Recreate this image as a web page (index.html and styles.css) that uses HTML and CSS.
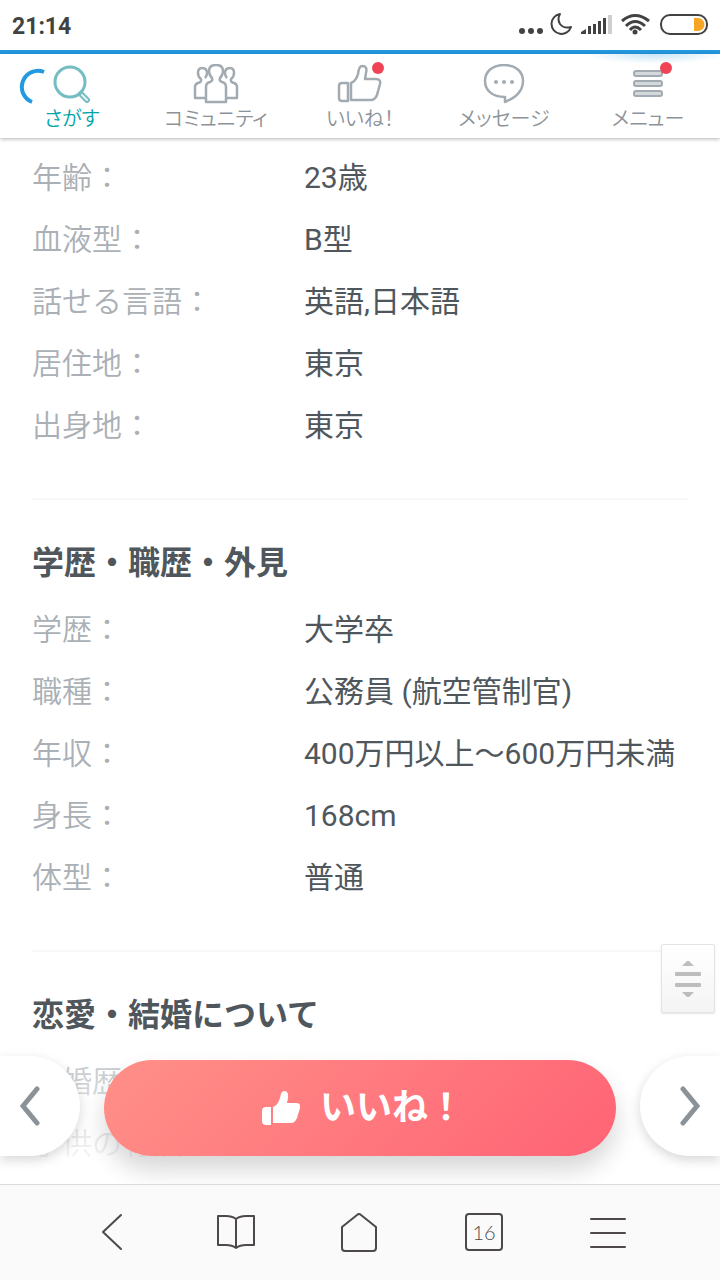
FILE: index.html
```html
<!DOCTYPE html>
<html lang="ja">
<head>
    <meta charset="utf-8">
    <meta name="viewport" content="width=device-width, initial-scale=1">
    <title>プロフィール</title>
    <link rel="stylesheet" href="styles.css">
</head>
<body>

<div class="status-bar">
    <div class="clock">21:14</div>
    <svg class="status-icons" width="192" height="28" viewBox="0 0 192 28" aria-hidden="true">
        <g fill="#424242">
            <circle cx="6" cy="19" r="3"/>
            <circle cx="15" cy="19" r="3"/>
            <circle cx="24" cy="19" r="3"/>
        </g>
        <path d="M44 2A10 10 0 1 0 55 15Q48 17 44 12Q41 7 44 2Z" fill="none" stroke="#424242" stroke-width="2" stroke-linejoin="round"/>
        <path d="M54 22v-2l5-3v5Z" fill="none"/>
        <path d="M65 22v-2l5-3v5ZM72 22v-8h3v8ZM77 22V12h3v10ZM82 22V9h3v13ZM87 22V6h3v16Z" fill="#424242"/>
        <path d="M92 22V3h4v19Z" fill="#cfcfcf"/>
        <g fill="none" stroke="#424242" stroke-width="3">
            <path d="M106 9Q119 -2 133 9"/>
            <path d="M110 14Q119 5 129 14"/>
            <path d="M114 18Q119 12 125 18"/>
        </g>
        <circle cx="119" cy="20" r="2.500" fill="#424242"/>
        <rect x="145" y="3" width="46" height="19" rx="9" fill="none" stroke="#424242" stroke-width="2"/>
        <path d="M178 6h4a6 6 0 0 1 0 13h-4Z" fill="#f8a526"/>
    </svg>
</div>
<div class="progress"></div>

<nav class="top-nav">
    <a href="#" class="active">
        <span class="nav-icon">
            <svg width="48" height="40" viewBox="0 0 48 40" fill="none" stroke="#74bdc2" stroke-width="3">
                <circle cx="22" cy="18" r="15"/>
                <path d="M33 30l6 6" stroke-width="6" stroke-linecap="round"/>
                <path d="M34 31l5 5" stroke="#e6f4f5" stroke-width="2" stroke-linecap="round"/>
            </svg>
        </span>
        さがす
    </a>
    <a href="#">
        <span class="nav-icon">
            <svg width="48" height="40" viewBox="0 0 48 40" fill="none" stroke="#a2abb1" stroke-width="2.500" stroke-linejoin="round">
                <path d="M15 34H3V23q0-3 3-4q4-1 3-4q-3-2-3-6q0-5 4-5q5 0 5 5q0 3-2 5"/>
                <path d="M33 34h12V23q0-3-3-4q-4-1-3-4q3-2 3-6q0-5-4-5q-5 0-5 5q0 3 2 5"/>
                <path d="M14 38V23q0-4 4-5q3-1 2-4q-3-3-3-7q0-6 7-6q7 0 7 6q0 4-3 7q-1 3 2 4q4 1 4 5v15Z"/>
            </svg>
        </span>
        コミュニティ
    </a>
    <a href="#">
        <span class="nav-icon">
            <svg width="48" height="40" viewBox="0 0 48 40" fill="none" stroke="#a2abb1" stroke-width="2.500" stroke-linejoin="round">
                <path d="M6 19h6v18H6q-3 0-3-3V22q0-3 3-3Z"/>
                <path d="M15 36V19q5-2 7-9q1-8 4-8q6 0 4 7l-1 6h11q5 0 4 5l-3 11q-2 5-6 5Z"/>
            </svg>
            <i class="badge"></i>
        </span>
        いいね！
    </a>
    <a href="#">
        <span class="nav-icon">
            <svg width="48" height="40" viewBox="0 0 48 40" fill="none" stroke="#a2abb1" stroke-width="2.500" stroke-linejoin="round">
                <path d="M25 38V33C12 33 5 26 5 17C5 7 13 1 24 1C35 1 43 7 43 17C43 27 35 34 25 38Z"/>
                <g fill="#a2abb1" stroke="none"><circle cx="16" cy="18" r="2"/><circle cx="24" cy="18" r="2"/><circle cx="32" cy="18" r="2"/></g>
            </svg>
        </span>
        メッセージ
    </a>
    <a href="#">
        <span class="nav-icon">
            <svg width="48" height="40" viewBox="0 0 48 40" fill="#d3d8da" stroke="#a2abb1" stroke-width="2">
                <rect x="10" y="7" width="28" height="5" rx="2"/>
                <rect x="10" y="17" width="28" height="5" rx="2"/>
                <rect x="10" y="27" width="28" height="5" rx="2"/>
            </svg>
            <i class="badge"></i>
        </span>
        メニュー
    </a>
    <svg class="spinner" width="30" height="40" viewBox="0 0 30 40" aria-hidden="true">
        <path d="M26 4A16 16 0 0 0 14 34" fill="none" stroke="#2399e0" stroke-width="4"/>
    </svg>
</nav>

<div class="content">
    <main class="profile">
        <section>
            <dl>
                <dt>年齢：</dt><dd>23歳</dd>
                <dt>血液型：</dt><dd>B型</dd>
                <dt>話せる言語：</dt><dd>英語,日本語</dd>
                <dt>居住地：</dt><dd>東京</dd>
                <dt>出身地：</dt><dd>東京</dd>
            </dl>
        </section>
        <section>
            <h2>学歴・職歴・外見</h2>
            <dl>
                <dt>学歴：</dt><dd>大学卒</dd>
                <dt>職種：</dt><dd>公務員 (航空管制官)</dd>
                <dt>年収：</dt><dd>400万円以上〜600万円未満</dd>
                <dt>身長：</dt><dd>168cm</dd>
                <dt>体型：</dt><dd>普通</dd>
            </dl>
        </section>
        <section>
            <h2>恋愛・結婚について</h2>
            <dl>
                <dt>結婚歴：</dt><dd></dd>
                <dt>子供の有無：</dt><dd></dd>
            </dl>
        </section>
    </main>

    <button class="scroll-handle" aria-label="スクロール">
        <svg width="28" height="40" viewBox="0 0 28 40" fill="#bdbdbd">
            <path d="M8 7l5-5h2l5 5ZM8 33l5 5h2l5-5Z"/>
            <rect x="1" y="13" width="26" height="4" rx="1"/>
            <rect x="1" y="24" width="26" height="4" rx="1"/>
        </svg>
    </button>

    <div class="actions">
        <button class="page-button prev" aria-label="前へ">
            <svg width="20" height="40" viewBox="0 0 20 40"><path d="M17 3L3 20L17 37"/></svg>
        </button>
        <button class="like-button">
            <svg width="40" height="36" viewBox="0 0 40 36" fill="#fff">
                <path d="M6 17h5v18H6q-4 0-4-4V21q0-4 4-4Z"/>
                <path d="M13 33V17q5-2 7-9q1-7 4-7q5 0 4 7l-1 5h9q5 0 4 5l-3 10q-2 5-6 5Z"/>
            </svg>
            いいね！
        </button>
        <button class="page-button next" aria-label="次へ">
            <svg width="20" height="40" viewBox="0 0 20 40"><path d="M3 3L17 20L3 37"/></svg>
        </button>
    </div>
</div>

<footer class="browser-bar">
    <button aria-label="戻る">
        <svg width="40" height="40" viewBox="0 0 40 40"><path d="M29 3L11 20L29 37"/></svg>
    </button>
    <button aria-label="ブックマーク">
        <svg width="40" height="40" viewBox="0 0 40 40"><path d="M20 7Q16 4 10 4H2v29h8q6 0 10 3q4-3 10-3h8V4h-8q-6 0-10 3v29"/></svg>
    </button>
    <button aria-label="ホーム">
        <svg width="40" height="40" viewBox="0 0 40 40"><path d="M2 15L17 3q2-2 4 0l15 12v21q0 3-3 3H5q-3 0-3-3Z"/></svg>
    </button>
    <button aria-label="タブ"><span class="tab-count">16</span></button>
    <button aria-label="メニュー">
        <svg width="40" height="40" viewBox="0 0 40 40"><path d="M3 7h34M3 21h34M3 35h34"/></svg>
    </button>
</footer>

</body>
</html>
```
FILE: styles.css
```css
* {
    padding: 0;
    margin: 0;
    box-sizing: border-box;
}

body {
    display: flex;
    flex-direction: column;
    height: 100vh;
    overflow: hidden;
    background-color: #fff;
    color: #50575c;
    font-family: Roboto, 'Noto Sans CJK JP', sans-serif;
}

button {
    border: none;
    background: none;
    font-family: inherit;
    cursor: pointer;
}

svg {
    display: block;
}

.status-bar {
    display: flex;
    flex: none;
    justify-content: space-between;
    align-items: center;
    height: 50px;
    padding: 2px 12px 0;
}

.clock {
    color: #424242;
    font-size: 23px;
    font-weight: bold;
}

.progress {
    flex: none;
    height: 4px;
    background-color: #2399e0;
}

.top-nav {
    position: relative;
    z-index: 2;
    display: flex;
    flex: none;
    height: 84px;
    padding-top: 10px;
    background: radial-gradient(ellipse 70px 10px at 91% 0, #c8e5f5, #fff);
    box-shadow: 0 1px 4px rgba(0, 0, 0, 0.3);
}

.top-nav a {
    display: flex;
    flex: 1;
    flex-direction: column;
    align-items: center;
    color: #8c9298;
    font-size: 20px;
    line-height: 30px;
    font-weight: 350;
    font-feature-settings: "palt";
    white-space: nowrap;
    text-decoration: none;
}

.top-nav a.active {
    color: #00a5ab;
}

.nav-icon {
    position: relative;
}

.badge {
    position: absolute;
    top: -2px;
    right: 0;
    width: 12px;
    height: 12px;
    border-radius: 50%;
    background-color: #ee4455;
}

.spinner {
    position: absolute;
    left: 18px;
    top: 14px;
}

.content {
    position: relative;
    flex: 1;
    min-height: 0;
}

.profile {
    height: 100%;
    overflow-y: auto;
    scrollbar-width: none;
    padding: 9px 32px 0;
}

section {
    padding-bottom: 41px;
}

section + section {
    border-top: 2px solid #f6f7f7;
    padding-top: 39px;
}

h2 {
    font-size: 32px;
    line-height: 48px;
    margin-bottom: 12px;
}

dl {
    display: grid;
    grid-template-columns: 272px 1fr;
    font-size: 30px;
    line-height: 62px;
}

dt {
    color: #aab0b5;
    font-weight: 350;
}

.scroll-handle {
    position: absolute;
    right: 5px;
    bottom: 171px;
    display: flex;
    justify-content: center;
    align-items: center;
    width: 54px;
    height: 69px;
    border: 1px solid #e4e4e0;
    border-radius: 2px;
    background: linear-gradient(#fff, #f4f4f4);
    box-shadow: 0 1px 2px rgba(0, 0, 0, 0.1);
}

.actions {
    position: absolute;
    left: 0;
    right: 0;
    bottom: 0;
    display: flex;
    align-items: flex-end;
    gap: 24px;
    padding: 16px 0 28px;
    background: linear-gradient(rgba(255, 255, 255, 0.2), #fff);
}

.page-button {
    display: flex;
    align-items: center;
    width: 80px;
    height: 100px;
    padding: 0 20px;
    background-color: #fff;
    box-shadow: 0 4px 12px rgba(0, 0, 0, 0.16);
}

.page-button path {
    fill: none;
    stroke: #8b9298;
    stroke-width: 5;
    stroke-linecap: round;
}

.prev {
    border-radius: 0 50px 50px 0;
}

.next {
    justify-content: flex-end;
    border-radius: 50px 0 0 50px;
}

.like-button {
    display: flex;
    flex: 1;
    justify-content: center;
    align-items: center;
    gap: 20px;
    height: 96px;
    padding-left: 4px;
    border-radius: 48px;
    background: linear-gradient(135deg, #ff9088, #ff6375);
    box-shadow: 0 14px 24px rgba(0, 0, 0, 0.16);
    color: #fff;
    font-size: 36px;
    line-height: 48px;
    font-weight: bold;
}

.browser-bar {
    position: relative;
    display: flex;
    flex: none;
    height: 96px;
    padding: 0 50px 2px;
    border-top: 1px solid #dcdcdc;
    background-color: #fafafa;
}

.browser-bar button {
    display: flex;
    flex: 1;
    justify-content: center;
    align-items: center;
}

.browser-bar path {
    fill: none;
    stroke: #4d4949;
    stroke-width: 2;
    stroke-linecap: round;
    stroke-linejoin: round;
}

.tab-count {
    width: 38px;
    height: 38px;
    border: 2px solid #4d4949;
    border-radius: 4px;
    color: #4d4949;
    font-family: Lato, sans-serif;
    font-size: 20px;
    font-weight: 300;
    line-height: 34px;
}
```
